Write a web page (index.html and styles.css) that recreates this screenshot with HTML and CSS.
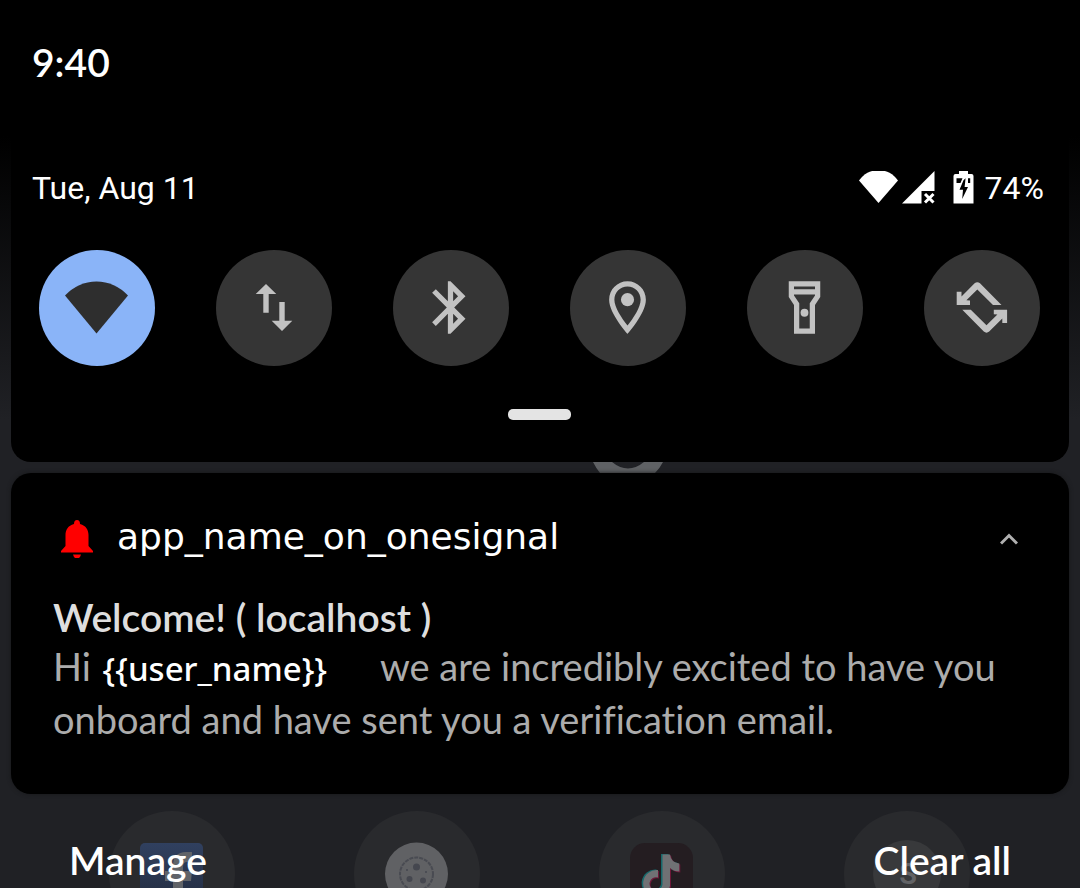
FILE: index.html
```html
<!DOCTYPE html>
<html lang="en">
<head>
<meta charset="utf-8">
<title>Notification shade</title>
<meta name="viewport" content="width=device-width, initial-scale=1">
<link rel="stylesheet" href="styles.css">
</head>
<body>
<div class="screen">
  <header class="clock"><time datetime="09:40">9:40</time></header>

  <section class="panel" aria-label="Quick settings">
    <div class="status">
      <time class="date" datetime="08-11">Tue, Aug 11</time>
      <div class="indicators">
        <svg class="ind-wifi" width="39" height="34" viewBox="0 0 39 34" aria-hidden="true"><path d="M0 9.500A23.500 23.500 0 0 1 39 9.500L19.500 32Z"/></svg>
        <svg class="ind-signal" width="33" height="34" viewBox="0 0 33 34" aria-hidden="true"><path d="M0 32.500H19.500V20H32.500V0Z"/><path class="cross" d="M23 23l8.500 8.500M31.500 23l-8.500 8.500"/></svg>
        <svg class="ind-battery" width="21" height="34" viewBox="0 0 21 34" aria-hidden="true"><path d="M6 0H15V3H18.500Q20.500 3 20.500 5V32.500H0.500V5Q0.500 3 2.500 3H6Z"/><path class="hole" d="M3.500 7.300H9.500L7.500 12H3.500ZM15 7.300H17.200V12H15ZM12.600 7.300L10.500 9.300L6.500 18.700H10L9.200 28L15 16H11.600Z"/></svg>
        <span>74%</span>
      </div>
    </div>
    <div class="tiles">
      <button class="tile on" aria-label="Wi-Fi"><svg viewBox="0 0 116 116"><path d="M26 45.500A42.500 42.500 0 0 1 89 45.500L57.500 83.500Z"/></svg></button>
      <button class="tile" aria-label="Mobile data"><svg viewBox="0 0 116 116"><path d="M50 34L60.300 44H52.700V62.700H47.300V44H39.700ZM66 81L55.700 70.700H63.300V52H68.700V70.700H76.300Z"/></svg></button>
      <button class="tile" aria-label="Bluetooth"><svg class="material" viewBox="0 0 24 24"><path d="M17.710 7.710L12 2h-1v7.590L6.410 5 5 6.410 10.590 12 5 17.590 6.410 19 11 14.410V22h1l5.710-5.710-4.300-4.290 4.300-4.290zM13 5.830l1.880 1.880L13 9.590V5.830zm1.880 10.460L13 18.170v-3.760l1.880 1.880z"/></svg></button>
      <button class="tile" aria-label="Location"><svg class="material" viewBox="0 0 24 24"><path d="M12 2C8.130 2 5 5.130 5 9c0 5.250 7 13 7 13s7-7.750 7-13c0-3.870-3.130-7-7-7zM7 9c0-2.760 2.240-5 5-5s5 2.240 5 5c0 2.880-2.880 7.190-5 9.880C9.920 16.210 7 11.850 7 9z"/><circle cx="12" cy="9" r="2.500"/></svg></button>
      <button class="tile" aria-label="Flashlight"><svg class="material" viewBox="0 0 24 24"><path d="M18 2H6v6l2 3v11h8V11l2-3V2zm-2 2v1H8V4h8zm-2 6.400V20h-4v-9.600L8 7.390V7h8v.390l-2 3.010z"/><circle cx="12" cy="14" r="1.500"/></svg></button>
      <button class="tile" aria-label="Auto-rotate"><svg viewBox="0 0 116 116"><path id="turn" d="M32.700 41.700V55H46V50.600L42.400 50.300L53.300 39.600L69 55H77.500L56 33.300Q53.300 31 50.600 33.300L37.500 46.400V41.700Z"/><use href="#turn" transform="rotate(180 57.900 57.400)"/></svg></button>
    </div>
    <div class="handle"></div>
  </section>

  <div class="gap" aria-hidden="true"><svg width="70" height="11" viewBox="0 0 70 11"><path d="M0 0H19Q35 13 51 0H70Q67 6 62 11H7Q3 6 0 0Z"/></svg></div>

  <article class="note">
    <header class="note-head">
      <svg class="bell" width="32" height="38" viewBox="0 0 32 38" aria-hidden="true"><path d="M16 0C18 0 19 1.500 19 4C25 5.500 27.500 10 27.500 15V26L32 31V32.500H0V31L4.500 26V15C4.500 10 7 5.500 13 4C13 1.500 14 0 16 0ZM12 34.500H20Q19 38.500 16 38.500Q13 38.500 12 34.500Z"/></svg>
      <span class="app">app_name_on_onesignal</span>
      <button class="collapse" aria-label="Collapse"><svg width="18" height="12" viewBox="0 0 18 12"><path d="M1 10.500L9 2.500L17 10.500"/></svg></button>
    </header>
    <h1>Welcome! ( localhost )</h1>
    <p>Hi <span class="user">{{user_name}}</span> we are incredibly excited to have you onboard and have sent you a verification email.</p>
  </article>

  <footer class="actions">
    <div class="dock" aria-hidden="true">
      <div class="folder"><svg viewBox="0 0 126 126"><defs><linearGradient id="fb" x1="0" y1="0" x2="0" y2="1"><stop offset="0" stop-color="#30405f"/><stop offset="1" stop-color="#232c40"/></linearGradient></defs><rect x="31" y="32" width="63" height="63" rx="5" fill="url(#fb)"/><path fill="#606368" d="M64 95V70H56V60H64V55Q64 41 77 41H83V51H78Q74 51 74 56V60H83L82 70H74V95Z"/></svg></div>
      <div class="folder"><svg viewBox="0 0 126 126"><circle cx="62.500" cy="63" r="31.500" fill="#606164"/><g fill="none" stroke="#494b52"><circle cx="62.500" cy="63" r="16.500" stroke-width="2" stroke-dasharray="4 1"/></g><g fill="#45474f"><circle cx="62.500" cy="56" r="3.500"/><circle cx="55.500" cy="68" r="3"/><circle cx="69" cy="69.500" r="3"/><circle cx="53" cy="59" r="1"/><circle cx="72" cy="61" r="1"/></g></svg></div>
      <div class="folder"><svg viewBox="0 0 126 126"><defs><path id="tune" d="M63 43H70.500Q71.500 51 79.800 52V60Q74.500 60 70.500 56.500V74A13.500 13.500 0 1 1 58.500 58.500V66A6.500 6.500 0 1 0 63 73Z"/></defs><rect x="31" y="32" width="63" height="63" rx="15" fill="#241d21"/><use href="#tune" x="-1" fill="#16696b"/><use href="#tune" x="1.500" y="1.500" fill="#6d1738"/><use href="#tune" x="0.500" y="0.500" fill="#707174"/></svg></div>
      <div class="folder"><svg viewBox="0 0 126 126"><circle cx="63" cy="63" r="34" fill="#38393b"/><text x="64" y="73" text-anchor="middle">S</text></svg></div>
    </div>
    <button class="action">Manage</button>
    <button class="action">Clear all</button>
  </footer>
</div>
</body>
</html>
```
FILE: styles.css
```css
* { box-sizing: border-box; }

body {
  margin: 0;
  background: #202125;
  color: #fff;
  font-family: Lato, "Open Sans", sans-serif;
  font-variant-ligatures: none;
}

button {
  padding: 0;
  border: 0;
  background: none;
  color: inherit;
  font: inherit;
  cursor: pointer;
}

svg { display: block; }

.screen {
  display: flex;
  flex-direction: column;
  min-height: 100vh;
  overflow: hidden;
  padding: 0 11px;
  background: linear-gradient(#000 136px, #202125 420px);
}

.clock {
  padding: 38px 22px 44px 21px;
  font-size: 39px;
  line-height: 48px;
  font-weight: 600;
}

.panel {
  padding: 38px 29px 42px 28px;
  border-radius: 0 0 20px 20px;
  background: #000;
}

.status {
  display: flex;
  justify-content: space-between;
  align-items: center;
  margin: 0 -4px 42px -7px;
  font-family: Roboto, sans-serif;
  font-size: 32px;
  line-height: 40px;
}

.indicators { display: flex; align-items: center; fill: #fff; }
.ind-signal { margin: 0 18px 0 4px; }
.ind-battery { margin-right: 11px; }
.cross { stroke: #fff; stroke-width: 3; }
.hole { fill: #000; }

.tiles { display: flex; justify-content: space-between; }

.tile {
  display: grid;
  place-items: center;
  width: 116px;
  height: 116px;
  border-radius: 50%;
  background: #353535;
  fill: #c2c2c2;
}
.tile.on { background: #8ab4f8; fill: #2e2e2e; }
.tile svg { width: 116px; height: 116px; }
.tile .material { width: 63px; height: 63px; margin: 0 1px 1px 0; }

.handle {
  width: 63px;
  height: 11px;
  margin: 43px auto 0;
  border-radius: 5px;
  background: #e4e4e4;
}

.gap { height: 11px; overflow: hidden; }
.gap svg { margin-left: 55%; fill: #5f6164; }

.note {
  padding: 42px 43px 48px 42px;
  border-radius: 20px;
  background: #000;
  box-shadow: 0 0 4px #17181a;
}

.note-head { display: flex; align-items: center; height: 48px; margin-bottom: 31px; }
.bell { margin: 0 24px 0 8px; fill: #f00; }
.app {
  flex: 1;
  padding-bottom: 4px;
  font-family: "DejaVu Sans", sans-serif;
  font-size: 36px;
  line-height: 44px;
}
.collapse { padding: 8px; }
.collapse path { fill: none; stroke: #b0b0b0; stroke-width: 3; }

.note h1 {
  margin: 0;
  color: #dedede;
  font-size: 39px;
  line-height: 46px;
  font-weight: 600;
}

.note p {
  margin: 0;
  color: #acacac;
  font-size: 38px;
  line-height: 53px;
}

.user {
  margin: 0 44px 0 2px;
  color: #fff;
  font-family: "Noto Sans", sans-serif;
  font-size: 33px;
  line-height: 1;
  font-weight: 500;
}

.actions {
  position: relative;
  display: flex;
  flex: 1;
  justify-content: space-between;
  align-items: flex-start;
  padding: 42px 58px 0;
  font-size: 39px;
  line-height: 48px;
  font-weight: 600;
}

.action { position: relative; }

.dock {
  position: absolute;
  inset: 17px 40px 0 38px;
  display: grid;
  grid-template-columns: repeat(4, 1fr);
  justify-items: center;
  overflow: hidden;
}

.folder {
  width: 126px;
  height: 126px;
  border-radius: 50%;
  background: #292a2d;
}

.folder text { fill: #626366; font-family: Roboto, sans-serif; font-size: 29px; }
```
